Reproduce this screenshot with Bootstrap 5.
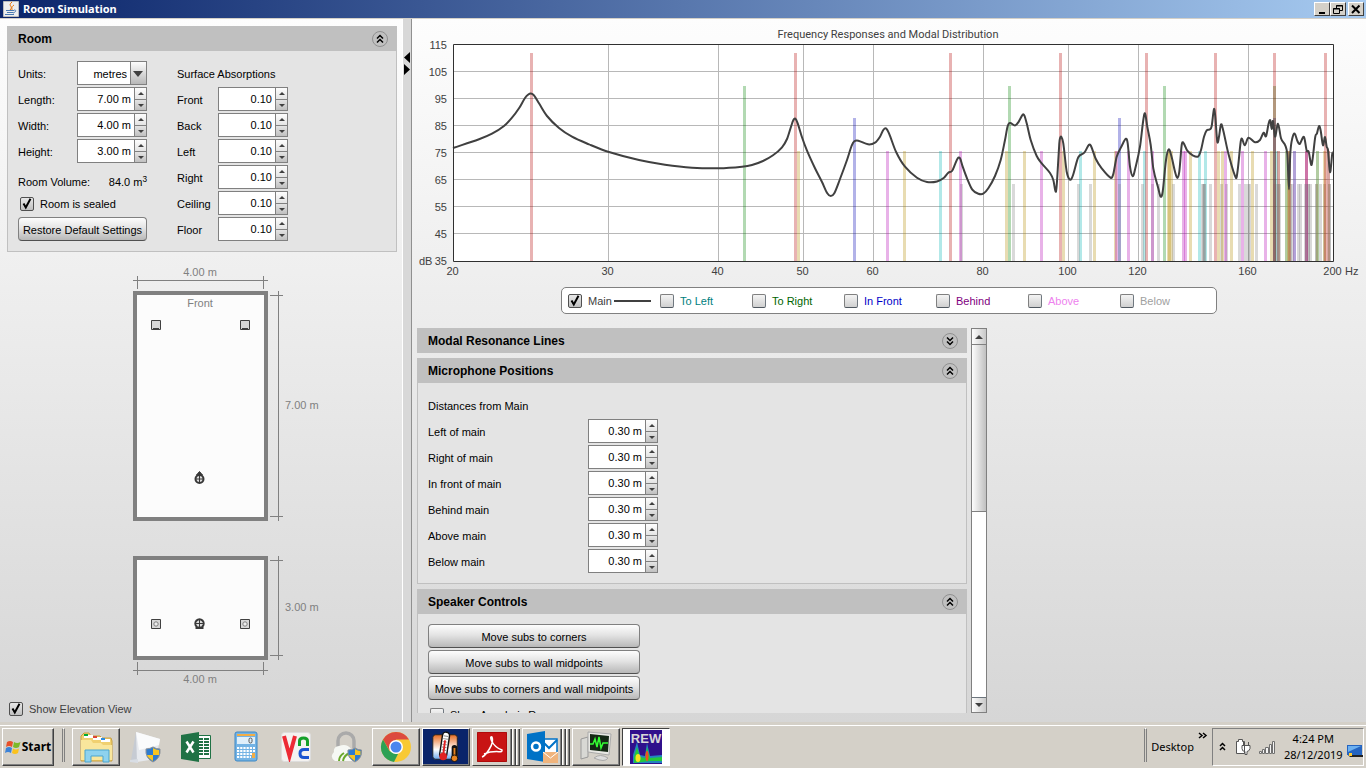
<!DOCTYPE html>
<html lang="en">
<head>
<meta charset="utf-8">
<meta name="viewport" content="width=device-width, initial-scale=1">
<title>Room Simulation</title>
<link href="https://cdn.jsdelivr.net/npm/bootstrap@5.3.0/dist/css/bootstrap.min.css" rel="stylesheet">
<style>
body{font:11px/14px "Liberation Sans",Arial,sans-serif;color:#000;background:#d4d0c8}
.titlebar{height:18px;flex:none;background:linear-gradient(90deg,#0a246a,#a6caf0);color:#fff;font:bold 11px/18px "Noto Sans",sans-serif;padding:0 2px 0 3px}
.winbtn{width:16px;height:14px;padding:0;background:#d4d0c8;border:1px solid;border-color:#fff #404040 #404040 #fff;display:flex;align-items:center;justify-content:center}
.winbtn-close{margin-left:2px}
.app{background:linear-gradient(#fdfdfd,#d6d6d6);border-top:1px solid #d4d0c8;min-height:0}
.sidebar{width:403px;border-right:1px solid #fff;padding:7px 5px 6px 7px}
.splitter{width:9px;background:#d8d8d8;border-right:1px solid #909090;padding-top:32px}
.workspace{min-width:0}
.group{background:#e4e4e4;border:1px solid #c0c0c0}
.group-head{height:25px;margin:-1px -1px 0;background:#c0c0c0;font-weight:bold;font-size:12px;padding:0 9px 0 11px}
.group-body{padding:10px}
.roundbtn{width:16px;height:16px;padding:0;border:0;background:none;display:flex}
.rows{display:grid;grid-auto-rows:24px;row-gap:2px;align-items:center}
.rows-room{grid-template-columns:59px 70px;margin-right:30px}
.rows-surface{grid-template-columns:41px 70px}
.rows-mic{grid-template-columns:160px 70px}
.rows>label,.rows>span{padding-top:2px}
.span-all{grid-column:1/-1}
.spin{display:grid;grid-template-columns:1fr 12px;grid-template-rows:1fr 1fr;height:24px;border:1px solid #808080;background:#fff}
.spin input{grid-row:1/3;min-width:0;width:100%;border:0;padding:0 3px 0 0;text-align:right;background:#fff;outline:0}
.spin button{border:0;border-left:1px solid #808080;padding:0;background:linear-gradient(#fdfdfd,#e4e4e4);display:flex;align-items:center;justify-content:center}
.spin button:last-child{border-top:1px solid #808080;background:linear-gradient(#e4e4e4,#c0c0c0)}
.spin button::before,.arrow-up::before,.arrow-down::before{content:"";border:3px solid transparent;border-top:0;border-bottom:3px solid #404040}
.spin button:last-child::before{border-top:3px solid #404040;border-bottom:0}
.arrow-up::before{border-width:0 4px 4px}
.arrow-down::before{border:4px solid transparent;border-top:4px solid #404040;border-bottom:0}
.units{appearance:none;height:24px;border:1px solid #808080;border-radius:0;padding:1px 19px 0 0;text-align:right;text-align-last:right;color:#000;
background:#fff url("data:image/svg+xml,%3Csvg xmlns='http://www.w3.org/2000/svg' width='16' height='22'%3E%3Cdefs%3E%3ClinearGradient id='g' x2='0' y2='1'%3E%3Cstop stop-color='%23fdfdfd'/%3E%3Cstop offset='1' stop-color='%23b8b8b8'/%3E%3C/linearGradient%3E%3C/defs%3E%3Cpath fill='url(%23g)' d='M0 0h16v22H0z'/%3E%3Cpath d='M.5 0v22' stroke='%23808080'/%3E%3Cpath d='M3 9h10l-5 6z' fill='%23404040'/%3E%3C/svg%3E") right center no-repeat}
.check-row{display:flex;align-items:center;gap:6px;padding-left:2px}
.tick{appearance:none;width:14px;height:14px;flex:none;margin:0;border:1px solid #808080;border-radius:2px;border-bottom-color:#505860;border-right-color:#707880;background:linear-gradient(#f4f4f4,#d0d0d0)}
.tick:checked{border-color:#505050;background:url("data:image/svg+xml,%3Csvg xmlns='http://www.w3.org/2000/svg' width='12' height='12'%3E%3Cpath d='M2.5 5.5 4.8 9.5 9.5.8' fill='none' stroke='%23000' stroke-width='2'/%3E%3C/svg%3E"),linear-gradient(#e8e8e8,#c0c0c0)}
.pushbtn{height:24px;padding:1px 0 0;border:1px solid #808080;border-bottom-color:#505050;border-radius:4px;background:linear-gradient(#fdfdfd,#e4e4e4 45%,#b8b8b8);color:#000;text-align:center}
.plan{display:block;width:100%;margin-top:10px}
.plan text{fill:#808080}
.chart text{fill:#404040}
.chart .chart-title{font-family:Roboto,sans-serif}
.legend-box{width:656px;height:27px;border:1px solid #808080;border-radius:5px;background:#fff;padding-left:5px}
.legend-box label{width:92px;padding-left:1px}
.ink{color:#404040}
.swatch{width:37px;height:2px;background:#404040;margin-left:-4px}
.scroller{padding:14px 0 9px 5px;min-height:0}
.panels{width:550px;overflow:hidden}
.panels>.group{margin-top:5px}
.vbar{width:16px;border:1px solid #808080;background:#fff}
.vbar button{display:flex;align-items:center;justify-content:center;padding:0;border:0;height:15px;background:linear-gradient(90deg,#fdfdfd,#c8c8c8)}
.thumb{height:168px;border:solid #808080;border-width:1px 0;background:linear-gradient(90deg,#fdfdfd,#c0c0c0)}
.speaker-btns{width:212px}
.taskbar{height:46px;flex:none;background:#d4d0c8;border-top:3px solid #d4d0c8;box-shadow:inset 0 1px #fff;padding:3px 2px 2px;font:11px/16px "Noto Sans",sans-serif}
.tasks{gap:2px;margin-left:7px}
.tbtn{width:48px;height:38px;padding:0;border:1px solid transparent;background:none;display:flex;align-items:center;justify-content:center}
.tbtn svg{display:block}
.raised{border-color:#fff #404040 #404040 #fff;box-shadow:inset -1px -1px #808080}
.stack{border-right:0;box-shadow:none;background:linear-gradient(90deg,transparent 37px,#808080 37px 38px,#404040 38px 39px,#fff 39px 40px,#d4d0c8 40px 41px,#808080 41px 42px,#404040 42px 43px,#fff 43px 44px,#d4d0c8 44px 45px,#808080 45px 46px,#404040 46px)}
.stack svg{margin-right:10px}
.thermo{background:#0a246a}
.pressed{background:#fff;border-color:#404040 #fff #fff #404040}
.start{width:52px;font:bold 12px/18px "Noto Sans",sans-serif;gap:1px}
.grip{width:3px;height:34px;border:solid;border-width:1px 1px 0;border-color:#fff #808080}
.desk{padding-top:11px}
.tray{height:38px;width:152px;border:1px solid;border-color:#808080 #fff #fff #808080;padding-left:6px}
</style>
</head>
<body class="d-flex flex-column vh-100 overflow-hidden">
<header class="titlebar d-flex align-items-center">
  <svg width="16" height="16" class="flex-shrink-0" viewBox="0 0 16 16" aria-hidden="true"><path fill="#eee" stroke="#bbb" d="M.5.5h15v15H.5z"/><path d="M9 1c-5 4 2 4-2 8M11 4c-3 2-2 3-2 5" fill="none" stroke="#e76f00"/><path d="M3 9.500h8M4 11.500h6M2 13.500h9M11 9c3 0 2 2-1 3" fill="none" stroke="#4a7ab0"/></svg>
  <span class="me-auto ps-1">Room Simulation</span>
  <button class="winbtn" aria-label="Minimise"><svg width="12" height="11"><path d="M3 9h6" stroke="#000" stroke-width="2"/></svg></button>
  <button class="winbtn" aria-label="Restore"><svg width="12" height="11" fill="none" stroke="#000"><path d="M4.500 4V1.500h6v5H8M4 2h7M1.500 4.500h6v5h-6zM1 5h7"/></svg></button>
  <button class="winbtn winbtn-close" aria-label="Close"><svg width="12" height="11"><path d="M2 1.500 9.500 9M9.500 1.500 2 9" stroke="#000" stroke-width="2"/></svg></button>
</header>

<main class="app d-flex flex-grow-1">
  <aside class="sidebar d-flex flex-column flex-shrink-0">
    <section class="group flex-shrink-0">
      <div class="group-head d-flex align-items-center justify-content-between">Room
        <button class="roundbtn" aria-label="Collapse Room"><svg width="16" height="16" fill="none"><circle cx="8" cy="8" r="7.500" stroke="#909090"/><path d="M5 7.500l3-3 3 3M5 11.500l3-3 3 3" stroke="#000" stroke-width="1.500"/></svg></button>
      </div>
      <div class="group-body d-flex">
        <div class="rows rows-room">
          <label for="units">Units:</label><select id="units" class="units"><option>metres</option></select>
          <label for="len">Length:</label><div class="spin"><input id="len" value="7.00 m"><button aria-label="Up"></button><button aria-label="Down"></button></div>
          <label for="wid">Width:</label><div class="spin"><input id="wid" value="4.00 m"><button aria-label="Up"></button><button aria-label="Down"></button></div>
          <label for="hei">Height:</label><div class="spin"><input id="hei" value="3.00 m"><button aria-label="Up"></button><button aria-label="Down"></button></div>
          <div class="span-all d-flex justify-content-between align-self-end"><span>Room Volume:</span><span>84.0 m<sup>3</sup></span></div>
          <label class="span-all check-row"><input type="checkbox" class="tick" checked>Room is sealed</label>
          <button class="pushbtn span-all">Restore Default Settings</button>
        </div>
        <div class="rows rows-surface">
          <span class="span-all text-nowrap">Surface Absorptions</span>
          <label for="s1">Front</label><div class="spin"><input id="s1" value="0.10"><button aria-label="Up"></button><button aria-label="Down"></button></div>
          <label for="s2">Back</label><div class="spin"><input id="s2" value="0.10"><button aria-label="Up"></button><button aria-label="Down"></button></div>
          <label for="s3">Left</label><div class="spin"><input id="s3" value="0.10"><button aria-label="Up"></button><button aria-label="Down"></button></div>
          <label for="s4">Right</label><div class="spin"><input id="s4" value="0.10"><button aria-label="Up"></button><button aria-label="Down"></button></div>
          <label for="s5">Ceiling</label><div class="spin"><input id="s5" value="0.10"><button aria-label="Up"></button><button aria-label="Down"></button></div>
          <label for="s6">Floor</label><div class="spin"><input id="s6" value="0.10"><button aria-label="Up"></button><button aria-label="Down"></button></div>
        </div>
      </div>
    </section>
    <svg class="plan" viewBox="7 262 390 430" font-size="11">
      <g fill="#fcfcfc" stroke="#808080" stroke-width="4"><path d="M135 293h131v226H135z"/><path d="M135 558h131v100H135z"/></g>
      <path fill="none" stroke="#808080" d="M133 280.500h135M137.500 276v13M263.500 276v13M278.500 291v230M270 295.500h13M270 516.500h13M278.500 556v104M270 560.500h13M270 655.500h13M133 670.500h135M137.500 662v13M263.500 662v13"/>
      <text x="200" y="276" text-anchor="middle">4.00 m</text><text x="200" y="307" text-anchor="middle">Front</text><text x="285" y="409">7.00 m</text><text x="285" y="611">3.00 m</text><text x="200" y="683" text-anchor="middle">4.00 m</text>
      <g fill="#d8d8d8" stroke="#404040"><path d="M151.500 320.500h9v9h-9zM240.500 320.500h9v9h-9zM151.500 619.500h9v9h-9zM240.500 619.500h9v9h-9z"/></g>
      <path stroke="#404040" d="M153 328.500h6M242 328.500h6"/>
      <g fill="#eee" stroke="#808080"><circle cx="156" cy="624" r="2.200"/><circle cx="245" cy="624" r="2.200"/></g>
      <g stroke="#383838" fill="#ddd"><path fill="#383838" d="M196.500 475l3-3.500 3 3.500z"/><circle cx="199.500" cy="479" r="4" stroke-width="2"/><path d="M199.500 475v8M195.500 479h8"/><path d="M196.500 628v-1.500a4.200 4.200 0 1 1 6 0v1.500z" stroke-width="2"/><path stroke-width="2" d="M196.500 627.500h6"/><path d="M199.500 619v9M195.500 623.500h8"/></g>
    </svg>
    <label class="check-row ink mt-auto"><input type="checkbox" class="tick" checked>Show Elevation View</label>
  </aside>
  <div class="splitter flex-shrink-0"><svg width="8" height="26"><path d="M7 1v11L1 6.500zM1 13v11l6-5.500z"/></svg></div>

  <section class="workspace flex-grow-1 d-flex flex-column">
    <svg class="chart d-block w-100 flex-shrink-0" viewBox="412 19 954 268" font-size="11">
      <path fill="#fff" d="M453 44h880v217H453z"/>
      <g id="grid" stroke="#b8b8b8"></g>
      <g id="modes"></g>
      <path id="response" fill="none" stroke="#404040" stroke-width="2" stroke-linejoin="round"/>
      <path fill="none" stroke="#303030" d="M453.500 44.500h880v217h-880z"/>
      <text class="chart-title" x="888" y="38" text-anchor="middle">Frequency Responses and Modal Distribution</text>
      <g id="ticks"></g>
    </svg>
    <div class="legend-box d-flex align-items-center mx-auto flex-shrink-0">
      <label class="check-row ink"><input type="checkbox" class="tick" checked>Main<span class="swatch"></span></label>
      <label class="check-row" style="color:#008080"><input type="checkbox" class="tick">To Left</label>
      <label class="check-row" style="color:#006400"><input type="checkbox" class="tick">To Right</label>
      <label class="check-row" style="color:#0000c8"><input type="checkbox" class="tick">In Front</label>
      <label class="check-row" style="color:#800080"><input type="checkbox" class="tick">Behind</label>
      <label class="check-row" style="color:#ee82ee"><input type="checkbox" class="tick">Above</label>
      <label class="check-row" style="color:#a0a0a0"><input type="checkbox" class="tick">Below</label>
    </div>
    <div class="scroller d-flex gap-1 flex-grow-1">
      <div class="panels">
        <div class="group-head d-flex align-items-center justify-content-between m-0">Modal Resonance Lines
          <button class="roundbtn" aria-label="Expand"><svg width="16" height="16" fill="none"><circle cx="8" cy="8" r="7.500" stroke="#909090"/><path d="M5 4.500l3 3 3-3M5 8.500l3 3 3-3" stroke="#000" stroke-width="1.500"/></svg></button></div>
        <section class="group">
          <div class="group-head d-flex align-items-center justify-content-between">Microphone Positions
            <button class="roundbtn" aria-label="Collapse"><svg width="16" height="16" fill="none"><circle cx="8" cy="8" r="7.500" stroke="#909090"/><path d="M5 7.500l3-3 3 3M5 11.500l3-3 3 3" stroke="#000" stroke-width="1.500"/></svg></button></div>
          <div class="group-body rows rows-mic">
            <span class="span-all">Distances from Main</span>
            <label for="m1">Left of main</label><div class="spin"><input id="m1" value="0.30 m"><button aria-label="Up"></button><button aria-label="Down"></button></div>
            <label for="m2">Right of main</label><div class="spin"><input id="m2" value="0.30 m"><button aria-label="Up"></button><button aria-label="Down"></button></div>
            <label for="m3">In front of main</label><div class="spin"><input id="m3" value="0.30 m"><button aria-label="Up"></button><button aria-label="Down"></button></div>
            <label for="m4">Behind main</label><div class="spin"><input id="m4" value="0.30 m"><button aria-label="Up"></button><button aria-label="Down"></button></div>
            <label for="m5">Above main</label><div class="spin"><input id="m5" value="0.30 m"><button aria-label="Up"></button><button aria-label="Down"></button></div>
            <label for="m6">Below main</label><div class="spin"><input id="m6" value="0.30 m"><button aria-label="Up"></button><button aria-label="Down"></button></div>
          </div>
        </section>
        <section class="group">
          <div class="group-head d-flex align-items-center justify-content-between">Speaker Controls
            <button class="roundbtn" aria-label="Collapse"><svg width="16" height="16" fill="none"><circle cx="8" cy="8" r="7.500" stroke="#909090"/><path d="M5 7.500l3-3 3 3M5 11.500l3-3 3 3" stroke="#000" stroke-width="1.500"/></svg></button></div>
          <div class="group-body">
            <div class="rows speaker-btns">
              <button class="pushbtn">Move subs to corners</button>
              <button class="pushbtn">Move subs to wall midpoints</button>
              <button class="pushbtn">Move subs to corners and wall midpoints</button>
              <label class="check-row"><input type="checkbox" class="tick">Show Anechoic Response</label>
            </div>
          </div>
        </section>
      </div>
      <div class="vbar d-flex flex-column">
        <button class="arrow-up" aria-label="Scroll up"></button>
        <div class="thumb"></div>
        <button class="arrow-down mt-auto border-top border-secondary" aria-label="Scroll down"></button>
      </div>
    </div>
  </section>
</main>

<footer class="taskbar d-flex align-items-start">
  <button class="tbtn raised start"><svg width="16" height="16" viewBox="0 0 16 16"><path fill="#e8502a" d="M2 3q3-2 6 0L7 8Q4 6 1 8z"/><path fill="#7db928" d="M9 3q3 2 6.500 0L14 8q-3 2-6 0z"/><path fill="#3b82d8" d="M1 9q3-2 6 0l-1 5q-3-2-6 0z"/><path fill="#fbc21c" d="M8 9.500q3 2 6 0L13 14q-3 2-6 0z"/></svg>Start</button>
  <div class="grip ms-2"></div>
  <div class="d-flex tasks">
    <button class="tbtn raised" aria-label="Explorer"><svg width="34" height="32" viewBox="0 0 34 32"><path fill="#f0d070" stroke="#c8a040" d="M2 30V5l3-3h5l2 3h9l2 2h9l1 3v20z"/><path fill="#fff" d="M5 4h9v3H5zM14 6h9v3h-9zM22 8h9v3h-9z"/><path fill="#0a3" d="M5 3h4v2H5z"/><path fill="#d43" d="M14 5h4v2h-4z"/><path fill="#2a8be0" d="M22 7h4v2h-4z"/><path fill="#f9e69c" d="M2 9h10l2 3h8l2 2h9v15H2z"/><path d="M6 31V19h24v12h-6v-6H12v6z" fill="#8ed2ee" stroke="#4aa5cf"/></svg></button>
    <button class="tbtn" aria-label="Server"><svg width="32" height="34" viewBox="0 0 32 34"><path fill="#c6cbd3" d="M1 30 6 2l6 3-4 27z"/><path fill="#e6e9ee" d="M6 2l24 7-4 20-19 3z"/><path fill="#fafbfc" d="M6 2l24 7-1 6L9 20z"/><path fill="#d8dde4" d="M0 30l8-1v4l-8-1z"/><path fill="#2d7bd0" stroke="#8a9098" d="M16 19q4 0 7-2 3 2 7 2 1 9-7 13-8-4-7-13z"/><path fill="#f8c420" d="M23 18q3 2 6 2v5h-6zM17 25h6v6q-5-3-6-6z"/></svg></button>
    <button class="tbtn" aria-label="Excel"><svg width="32" height="32" viewBox="0 0 32 32"><path fill="#fff" stroke="#207245" d="M17 4.500h13.500v23H17z"/><path stroke="#207245" stroke-width="2" stroke-dasharray="5 1" d="M18 8h11M18 11h11M18 14h11M18 17h11M18 20h11M18 23h11"/><path fill="#207245" d="M1 4l18-3v30L1 28z"/><path stroke="#fff" stroke-width="2.500" d="M6.500 10.500l7 11M13.500 10.500l-7 11"/></svg></button>
    <button class="tbtn" aria-label="Calculator"><svg width="24" height="32" viewBox="0 0 24 32"><rect x="1" y="1" width="22" height="29" rx="2" fill="#74b3e4" stroke="#3f88c4"/><path fill="#e0effa" d="M3 6h18v7H3z"/><path fill="#f3ad45" d="M3 3h18v2H3z"/><rect x="15" y="7" width="3" height="5" rx="1.500" fill="none" stroke="#555"/><path stroke="#fff" stroke-width="2" stroke-dasharray="2.200 1" d="M3 17h18M3 20h18M3 23h18M3 26h14"/><path fill="#f3ad45" d="M18 22h3v5h-3z"/></svg></button>
    <button class="tbtn" aria-label="VNC"><svg width="30" height="30" viewBox="0 0 30 30" fill="none"><rect x=".5" y=".5" width="29" height="29" rx="3" fill="#f4f2f0" stroke="#ddd"/><path d="M3 4l5.500 20L14 4" stroke="#ed2a35" stroke-width="4"/><path d="M18.500 14V9q0-3 4-3t4 3v5" stroke="#15a02a" stroke-width="3"/><path d="M28 17.500h-5q-4 0-4 4t4 4h5" stroke="#1b55d0" stroke-width="3"/></svg></button>
    <button class="tbtn" aria-label="Secure connection"><svg width="32" height="34" viewBox="0 0 32 34"><path d="M8 18v-7a8 8 0 0 1 16 0v7" fill="none" stroke="#aaa" stroke-width="3.500"/><path fill="#f6f8f4" d="M5 31q-6-4-1-9-1-5 5-6 8-3 12 3 9 0 8 9l-3 3z"/><path fill="none" stroke="#68a82c" stroke-width="2" d="M9 31q0-5 5-8M13 31q1-6 7-8"/><path fill="#2d7bd0" stroke="#8a9098" d="M18 20q4 0 7-2 3 2 6.500 2 1 8-6.500 12-8-4-7-12z"/><path fill="#f8c420" d="M25 19q3 2 5.500 2v4H25zM19 25h6v6q-5-3-6-6z"/></svg></button>
    <button class="tbtn raised" aria-label="Chrome"><svg width="32" height="32" viewBox="0 0 32 32"><circle cx="16" cy="16" r="15" fill="#f8c934"/><path fill="#dc4a3e" d="M3 8.500A15 15 0 0 1 29 8.500H16l-6.500 11z"/><path fill="#2da155" d="M3 8.500 9.500 20 16 23l2 0-4 8A15 15 0 0 1 3 8.500z"/><circle cx="16" cy="16" r="7" fill="#fff"/><circle cx="16" cy="16" r="5.500" fill="#4a86ee"/></svg></button>
    <button class="tbtn raised thermo" aria-label="Temperature monitor"><svg width="32" height="32" viewBox="1 0 32 34"><defs><linearGradient id="sky" y2="1" x2="0"><stop stop-color="#e86a20"/><stop offset=".6" stop-color="#fff"/><stop offset="1" stop-color="#6aa8f0"/></linearGradient></defs><rect x="3" y="4" width="26" height="26" rx="3" fill="url(#sky)" stroke="#222"/><path d="M17 5l-3 20" stroke="#111" stroke-width="9" stroke-linecap="round"/><path d="M17 5l-3 20" stroke="#fff" stroke-width="6" stroke-linecap="round"/><path d="M17 5l-3 20" stroke="#8a8a8a" stroke-width="5" stroke-dasharray="1 2"/><path d="M16 10l-2 16" stroke="#e02020" stroke-width="2"/><circle cx="14" cy="27" r="4" fill="#e02020"/><path d="M26 18v10" stroke="#111" stroke-width="6" stroke-linecap="round"/><path d="M26 18v10" stroke="#e88420" stroke-width="2"/><circle cx="26" cy="29" r="3.500" fill="#e88420" stroke="#111"/></svg></button>
    <button class="tbtn raised stack" aria-label="Adobe Reader"><svg width="30" height="30" viewBox="0 0 30 30"><rect width="30" height="30" rx="2" fill="#c81414" stroke="#900"/><path d="M5 25c3-1 13-13 10-20-3-2-1 9 10 13 1 4-6-1-18 4" fill="none" stroke="#fff" stroke-width="1.500"/></svg></button>
    <button class="tbtn raised stack" aria-label="Outlook"><svg width="32" height="34" viewBox="0 0 32 34"><path fill="#fff" stroke="#0072c6" stroke-width="1.500" d="M16 9h15v16H16z"/><path d="M18 13l5 5 8-8" fill="none" stroke="#0072c6" stroke-width="2"/><path fill="#0072c6" d="M1 4l18-3v31L1 29z"/><circle cx="10" cy="16.500" r="4" fill="none" stroke="#fff" stroke-width="2.500"/><path fill="#f0b47c" d="M17 22h15v11H17z"/><path d="M17 22l7.500 6 7.500-6" fill="none" stroke="#fff"/></svg></button>
    <button class="tbtn raised" aria-label="Resource monitor"><svg width="32" height="32" viewBox="0 0 32 32"><path fill="#d8d8d4" stroke="#999" d="M1 8l7-2v20l-7 2z"/><path fill="#e8e8e4" stroke="#aaa" d="M8 1l23 2-2 21-21-3z"/><path fill="#142814" d="M10 3l19 2-1 16-18-2z"/><path fill="none" stroke="#3f3" stroke-width="1.500" d="M10 13h3l2-5 2 8 2-10 2 11 2-5h5"/><path fill="#ddd" stroke="#aaa" d="M14 27q6-5 14 0-3 5-14 0z"/></svg></button>
    <button class="tbtn pressed" aria-label="REW"><svg width="32" height="34" viewBox="0 0 32 34"><path fill="#30108c" d="M0 0h32v34H0z"/><path fill="#2484c0" d="M3 33V25l4-13 3 13 5 1 2-13 3 13 12-1v8z"/><path fill="#24c83c" d="M4 33v-6l3-10 3 10 5 1 2-11 3 11 12-1v4H20z"/><ellipse cx="8" cy="28" rx="2.500" ry="4" fill="#f8e020"/><ellipse cx="17" cy="26" rx="1.500" ry="5" fill="#f05020"/><text x="16" y="13" text-anchor="middle" font-family="Liberation Sans" font-size="13" font-weight="bold" fill="#d8d8d8">REW</text></svg></button>
  </div>
  <div class="ms-auto d-flex align-items-start">
    <div class="grip me-1"></div>
    <span class="desk">Desktop</span>
    <svg width="10" height="7" class="mx-1 mt-1" fill="none" stroke="#000" stroke-width="1.500"><path d="M1 1l3 2.500L1 6M5 1l3 2.500L5 6"/></svg>
    <div class="tray d-flex align-items-center">
      <svg width="8" height="10" fill="none" stroke="#000" stroke-width="1.500"><path d="M1 4l2.500-2.500L6 4M1 8l2.500-2.500L6 8"/></svg>
      <svg width="16" height="18" class="ms-2 flex-shrink-0" viewBox="0 0 16 18"><path fill="#fff" stroke="#555" d="M1.500 3.500h2v-2h4v2h2v12h-8zM7 7.500h8v3q-1 3-3 3v3h-2v-3q-3 0-3-3zM8.500 4v3M13.500 4v3"/></svg>
      <svg width="17" height="16" class="ms-2 flex-shrink-0" fill="#f4f4f4" stroke="#707070"><path d="M.5 12.500h2v2h-2zM3.500 10.500h2v4h-2zM6.500 8.500h3v6h-3zM10.500 5.500h2v9h-2zM13.500 2.500h2v12h-2z"/></svg>
      <div class="text-center ms-2 flex-shrink-0">4:24 PM<br>28/12/2019</div>
      <svg width="16" height="14" class="ms-1 mt-2 flex-shrink-0"><path fill="#2464c0" d="M0 1h15v10H0z"/><path fill="#6cb0f0" d="M1 2h13L1 8z"/><path fill="#222" d="M1 11h15v2H3z"/><path fill="#fc3" d="M2 9h3v3H2z"/></svg>
    </div>
  </div>
</footer>

<script src="https://cdn.jsdelivr.net/npm/bootstrap@5.3.0/dist/js/bootstrap.bundle.min.js"></script>
<script>
// Log frequency axis: one decade (20 to 200 Hz) spans 880 units
const xOf = f => 453.5 + 880 * Math.log10(f / 20);
const byId = id => document.getElementById(id);
let grid = '', ticks = '';
for (const f of [20, 30, 40, 50, 60, 80, 100, 120, 160, 200]) {
  const x = Math.floor(xOf(f)) + .5;
  if (f > 20 && f < 200) grid += `<path d="M${x} 45v216"/>`;
  ticks += `<text x="${x - 1}" y="275" text-anchor="middle">${f}</text>`;
}
ticks += '<text x="1345" y="275">Hz</text><text x="419" y="265">dB</text>';
for (let i = 0; i <= 8; i++) {
  const y = 44.5 + 27 * i;
  if (i && i < 8) grid += `<path d="M454 ${y}h879"/>`;
  ticks += `<text x="447" y="${y + 4.5}" text-anchor="end">${115 - 10 * i}</text>`;
}
byId('grid').innerHTML = grid;
byId('ticks').innerHTML = ticks;

// Resonances of a 7 x 4 x 3 m room, colour and height by the kind of mode
const kinds = {100: ['#b40000', 53], '010': ['#008200', 86], '001': ['#0000b4', 118],
  110: ['#b48c00', 151], 101: ['#b400b4', 151], '011': ['#00b4b4', 151], 111: ['#808080', 184]};
let modes = [];
for (let l = 0; l < 9; l++) for (let w = 0; w < 5; w++) for (let h = 0; h < 4; h++) {
  const f = 343 / 2 * Math.hypot(l / 7, w / 4, h / 3);
  if (f > 20 && f < 199.500) modes.push([f, kinds[`${+!!l}${+!!w}${+!!h}`]]);
}
byId('modes').innerHTML = modes.map(([f, [c, y]]) =>
  `<rect x="${Math.floor(xOf(f) - 1)}" y="${y}" width="3" height="${261 - y}" fill="${c}" fill-opacity=".3"/>`).join('');

// Response at the main position, as x,y pairs joined by a smooth curve
const p = `453,148 479,139.300 492,133.700 504,126 512,117.700 519,108.300 525,98 528,94.700 531,93.500 534,95.300 539,103.300 547,116 559,128 572,136.700 589,144.300 609,152 639,160 665,164.700 692,167.700 719,168.300 742,166.700
752,165 763,161 773,155.300 782,147.300 787,139 791,126.700 793.300,120.300 795.300,118.700 797.700,123.300 802,137.300 807,150.700 815,168.300 822,182 827.300,193.300 830.700,196 834.300,193.300 840,179 847,160 851.700,145.700 854.300,141.300 858.300,140.700 868,144.300 875,142.700 880,136.700 883.300,130 886,128.300 889,133.300 896,151.700 905,166.700 917,177.700 927,182 937,181.500 944,177.700 948.300,172.700 952,171 955,164.300 957.700,158.300 960,158.300 962.700,166.700 967,178.300 972.300,189.700 978.300,193.700 983.300,193.700 988.300,188.300 995,176 1000.700,160 1005,140 1007.700,126 1010,123 1015,125.500 1018.300,122.300 1022.700,114.700 1024.300,115.300 1026.700,123.300 1030.700,140 1036.700,156 1041.700,163.300 1050,173 1053.300,180 1056,191.700 1057.300,176.700 1059.300,143.300
1060,138.300 1061.300,136.700 1063.300,143.300 1066.700,171.700 1070,179.700 1072.700,176 1078.300,157.300 1084.300,152.700 1089,144.700 1091,146 1095.700,158.700 1101.700,168.300 1111,178 1113.300,174 1116.700,156.700 1121.700,146 1126,138.700 1127.700,143.300 1130,166.700 1132.700,176.300 1135.300,168.300 1140,146.700 1143.300,120 1145,113.300 1147.300,126.700 1150.700,145 1153.300,168.300 1158.300,188.300 1160.700,196.700 1162.700,191.700 1166,160 1168.700,149.300 1171.700,157.300 1175,171.700 1177.300,178 1179.300,171.700 1181.700,145 1183.300,142.700 1187.300,150.700 1192.700,155.300 1198.300,156.300 1201,150 1204,136.700 1206.700,130.300 1210,129.300
1211.700,126 1214,109 1215.300,116.700 1217.300,141.700 1219,136.700 1221,124.300 1223.300,130.700 1228.300,153.300 1236,178 1237.700,170 1240.700,141.700 1242,138.700 1244.700,145.300 1248.300,137.700 1255,142.300 1260,140 1263.700,132.700 1266,136.300 1268.700,123.300 1270.300,120.300 1271.700,129 1273,121 1275,136.700 1278,123.700 1281,138.300 1287.300,153.300 1289,189.300 1290.300,153.300 1292.300,138.300 1294.700,133.700 1297.300,140.700 1299.700,144 1304,137 1306.700,150.700 1308.700,151.700 1311.300,165 1312.700,158.300 1315.300,136.700 1317,133.300 1319,126 1320.700,130.700 1323,145.300 1325,137 1326.700,146.700 1328,150 1330,172.300 1332.300,153.300 1333,153`
  .split(/\s+/).map(s => s.split(',').map(Number));
let d = `M${p[0]}`;
for (let i = 0; i < p.length - 1; i++) {
  const a = p[i - 1] || p[i], b = p[i], c = p[i + 1], e = p[i + 2] || c;
  const dx = (c[0] - b[0]) / 3;
  const sb = (c[1] - a[1]) / (c[0] - a[0]), sc = (e[1] - b[1]) / (e[0] - b[0]);
  d += `C${b[0] + dx} ${b[1] + sb * dx} ${c[0] - dx} ${c[1] - sc * dx} ${c}`;
}
byId('response').setAttribute('d', d);
</script>
</body>
</html>
